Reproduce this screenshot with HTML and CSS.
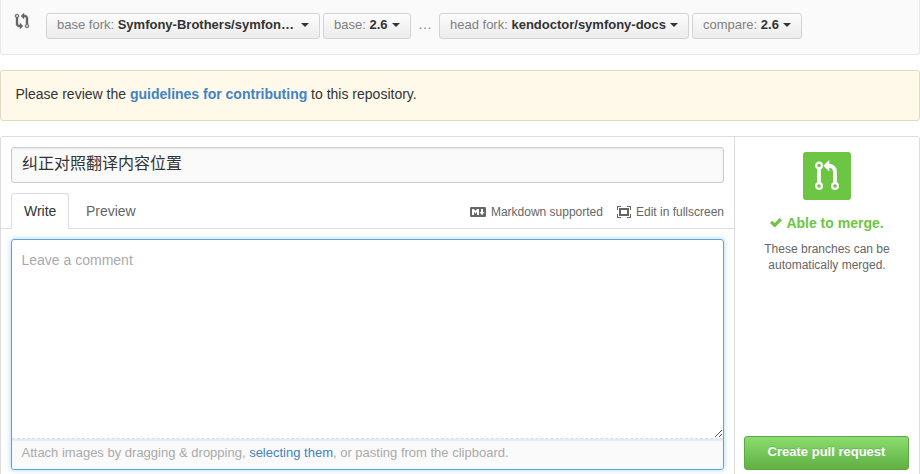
FILE: index.html
```html
<!DOCTYPE html>
<html lang="en">
<head>
<meta charset="utf-8">
<title>Open a pull request</title>
<link rel="stylesheet" href="styles.css">
</head>
<body>
<div class="range">
  <svg class="range-icon" width="14" height="16" viewBox="0 0 14 16"><path d="M5 12H4c-.27-.02-.48-.11-.69-.31-.21-.2-.3-.42-.31-.69V4.720A1.993 1.993 0 0 0 2 1a1.993 1.993 0 0 0-1 3.720V11c.03.78.34 1.470.94 2.060.6.59 1.280.91 2.060.94h1v2l3-3-3-3v2zM2 1.800c.66 0 1.200.55 1.200 1.200 0 .65-.55 1.200-1.200 1.200C1.350 4.200.8 3.650.8 3c0-.65.55-1.200 1.200-1.200zm11 9.480V5c-.03-.78-.34-1.470-.94-2.060-.6-.59-1.280-.91-2.060-.94H9V0L6 3l3 3V4h1c.27.02.48.11.69.31.21.2.3.42.31.69v6.280A1.993 1.993 0 0 0 12 15a1.993 1.993 0 0 0 1-3.720zm-1 2.920c-.66 0-1.200-.55-1.200-1.200 0-.65.55-1.200 1.200-1.200.65 0 1.200.55 1.200 1.200 0 .65-.55 1.200-1.200 1.200z"/></svg>
  <button class="select select-base-fork"><span>base fork: <b>Symfony-Brothers/symfon…</b></span><i class="caret"></i></button>
  <button class="select select-base"><span>base: <b>2.6</b></span><i class="caret"></i></button>
  <span class="dots">…</span>
  <button class="select select-head-fork"><span>head fork: <b>kendoctor/symfony-docs</b></span><i class="caret"></i></button>
  <button class="select select-compare"><span>compare: <b>2.6</b></span><i class="caret"></i></button>
</div>

<div class="flash">Please review the <a href="#">guidelines for contributing</a> to this repository.</div>

<div class="composer">
  <div class="main">
    <div class="title-field">纠正对照翻译内容位置</div>
    <div class="tabs">
      <span class="tab tab-selected">Write</span>
      <span class="tab">Preview</span>
      <div class="tools">
        <span class="tool tool-markdown"><svg width="16" height="10" viewBox="0 0 16 10"><path fill-rule="evenodd" d="M1.200 0h13.600Q16 0 16 1.200v7.600Q16 10 14.800 10H1.200Q0 10 0 8.800V1.200Q0 0 1.200 0zM2 2v6h2V4.800l1.500 1.900L7 4.800V8h2V2H7L5.500 4 4 2zm9 0v3H9.500L12 8.300 14.500 5H13V2z"/></svg>Markdown supported</span>
        <span class="tool tool-fullscreen"><svg width="14" height="12" viewBox="0 0 14 12"><path fill-rule="evenodd" d="M0 0h4v1H1v3H0zM10 0h4v4h-1V1h-3zM0 8h1v3h3v1H0zM13 8h1v4h-4v-1h3zM2 2h10v8H2zm2 2v4h6V4z"/></svg>Edit in fullscreen</span>
      </div>
    </div>
    <div class="comment">
      <div class="placeholder">Leave a comment
        <svg class="grip" width="9" height="9" viewBox="0 0 9 9"><path d="M1 8L8 1M5 8L8 5"/></svg>
      </div>
      <div class="attach">Attach images by dragging &amp; dropping, <a href="#">selecting them</a>, or pasting from the clipboard.</div>
    </div>
  </div>
  <div class="side">
    <div class="badge">
      <svg width="24" height="32" viewBox="0 0 24 32">
        <g class="branch-nodes"><circle cx="4" cy="5.500" r="2.900"/><circle cx="4" cy="26" r="2.900"/><circle cx="20" cy="26" r="2.900"/></g>
        <path class="branch-lines" d="M4 8.500V23M13 5.700c5 0 7 2.300 7 6.800V23"/>
        <path d="M8.300 5.700L14.300 0v11.400z"/>
      </svg>
    </div>
    <div class="status"><svg width="12" height="10" viewBox="0 0 12 10"><path d="M12 2.200L4.700 9.500 0 5l2.200-2.200 2.500 2.300L9.800 0z"/></svg><span>Able to merge.</span></div>
    <p>These branches can be<br>automatically merged.</p>
    <button class="submit">Create pull request</button>
  </div>
</div>
</body>
</html>
```
FILE: styles.css
```css
* { box-sizing: border-box; }
html { height: 100%; overflow: hidden; }
body {
  margin: 0;
  height: 474px;
  overflow: hidden;
  background: #fff;
  color: #333;
  font: 14px/20px "Liberation Sans", "Noto Sans CJK SC", sans-serif;
}
a { color: #4183c4; text-decoration: none; }
button { font-family: inherit; margin: 0; }
svg { display: block; flex: none; }

.range {
  display: flex;
  align-items: flex-start;
  height: 55px;
  padding: 13px 14px 0;
  border: 1px solid #e8e8e8;
  border-top: 0;
  border-radius: 0 0 3px 3px;
  background: #fafafa;
}
.range-icon { margin-right: 17px; overflow: visible; fill: #666; stroke: #666; stroke-width: .4; }
.select {
  display: flex;
  align-items: center;
  justify-content: space-between;
  height: 26px;
  padding: 0 10px 2px;
  border: 1px solid #d3d3d3;
  border-radius: 3px;
  background: linear-gradient(#fcfcfc, #ececec);
  color: #808080;
  font-size: 13px;
  line-height: 20px;
  white-space: nowrap;
}
.select b { color: #333; }
.select-base-fork { width: 274px; margin-right: 3px; }
.select-base { width: 88px; }
.select-head-fork { width: 250px; margin-right: 3px; }
.select-compare { width: 110px; }
.caret {
  border: 4px solid transparent;
  border-top-color: #333;
  border-bottom: 0;
}
.dots { width: 28px; text-align: center; color: #888; line-height: 22px; }

.flash {
  height: 51px;
  margin: 15px 0;
  padding: 13px 14.500px;
  border: 1px solid #dfd8c2;
  border-radius: 3px;
  background: #fff9ea;
}
.flash a { font-weight: bold; }

.composer {
  display: flex;
  height: 360px;
  border: 1px solid #ddd;
  border-radius: 3px;
}
.main { width: 734px; border-right: 1px solid #ddd; padding-top: 10px; }
.title-field {
  height: 36px;
  margin: 0 10px;
  padding: 6px 10px;
  border: 1px solid #ccc;
  border-radius: 3px;
  background: #fafafa;
  box-shadow: inset 0 1px 2px rgba(0, 0, 0, .075);
  font-size: 16px;
}
.tabs {
  display: flex;
  height: 36px;
  margin-top: 10px;
  padding: 0 10px;
  border-bottom: 1px solid #ddd;
}
.tab { height: 36px; padding: 8px 16.500px; color: #666; }
.tab-selected {
  padding: 7px 12px;
  border: 1px solid #ddd;
  border-bottom: 0;
  border-radius: 3px 3px 0 0;
  background: #fff;
  color: #333;
}
.tools { display: flex; gap: 14px; margin-left: auto; padding-top: 9px; }
.tool { display: flex; align-items: center; height: 20px; gap: 5px; color: #666; font-size: 12px; fill: #666; }
.comment {
  height: 231px;
  margin: 10px 10px 0;
  border: 1px solid #51a7e8;
  border-radius: 3px;
  box-shadow: 0 0 5px rgba(81, 167, 232, .5);
  color: #aaa;
}
.placeholder {
  position: relative;
  height: 199px;
  padding: 10px 9.500px;
  border-bottom: 1px dashed #d5dce2;
}
.grip { position: absolute; right: 0; bottom: 0; fill: none; stroke: #555; }
.attach {
  height: 30px;
  padding: 4px 9.500px;
  border-radius: 0 0 3px 3px;
  background: #fafafa;
  box-shadow: inset 0 2px 2px rgba(81, 167, 232, .16);
  font-size: 13px;
}

.side { flex: 1; padding: 15px 9px 0; text-align: center; }
.badge {
  display: flex;
  justify-content: center;
  width: 48px;
  height: 48px;
  margin: 0 auto;
  padding-top: 8px;
  border-radius: 3px;
  background: #6cc644;
  fill: #fff;
}
.branch-nodes { fill: none; stroke: #fff; stroke-width: 2.200; }
.branch-lines { fill: none; stroke: #fff; stroke-width: 3.800; }
.status {
  display: flex;
  align-items: center;
  justify-content: center;
  gap: 4px;
  margin-top: 13px;
  color: #6cc644;
  font-weight: bold;
  fill: #6cc644;
}
.side p { margin: 8px 0 0; color: #666; font-size: 12px; line-height: 16px; }
.submit {
  display: block;
  width: 165px;
  height: 34px;
  margin-top: 163px;
  padding: 0 0 3px;
  border: 1px solid #5ca941;
  border-radius: 3px;
  background: linear-gradient(#8add6d, #60b044);
  color: #fff;
  font-size: 13px;
  font-weight: bold;
  text-shadow: 0 -1px 0 rgba(0, 0, 0, .15);
}
```
